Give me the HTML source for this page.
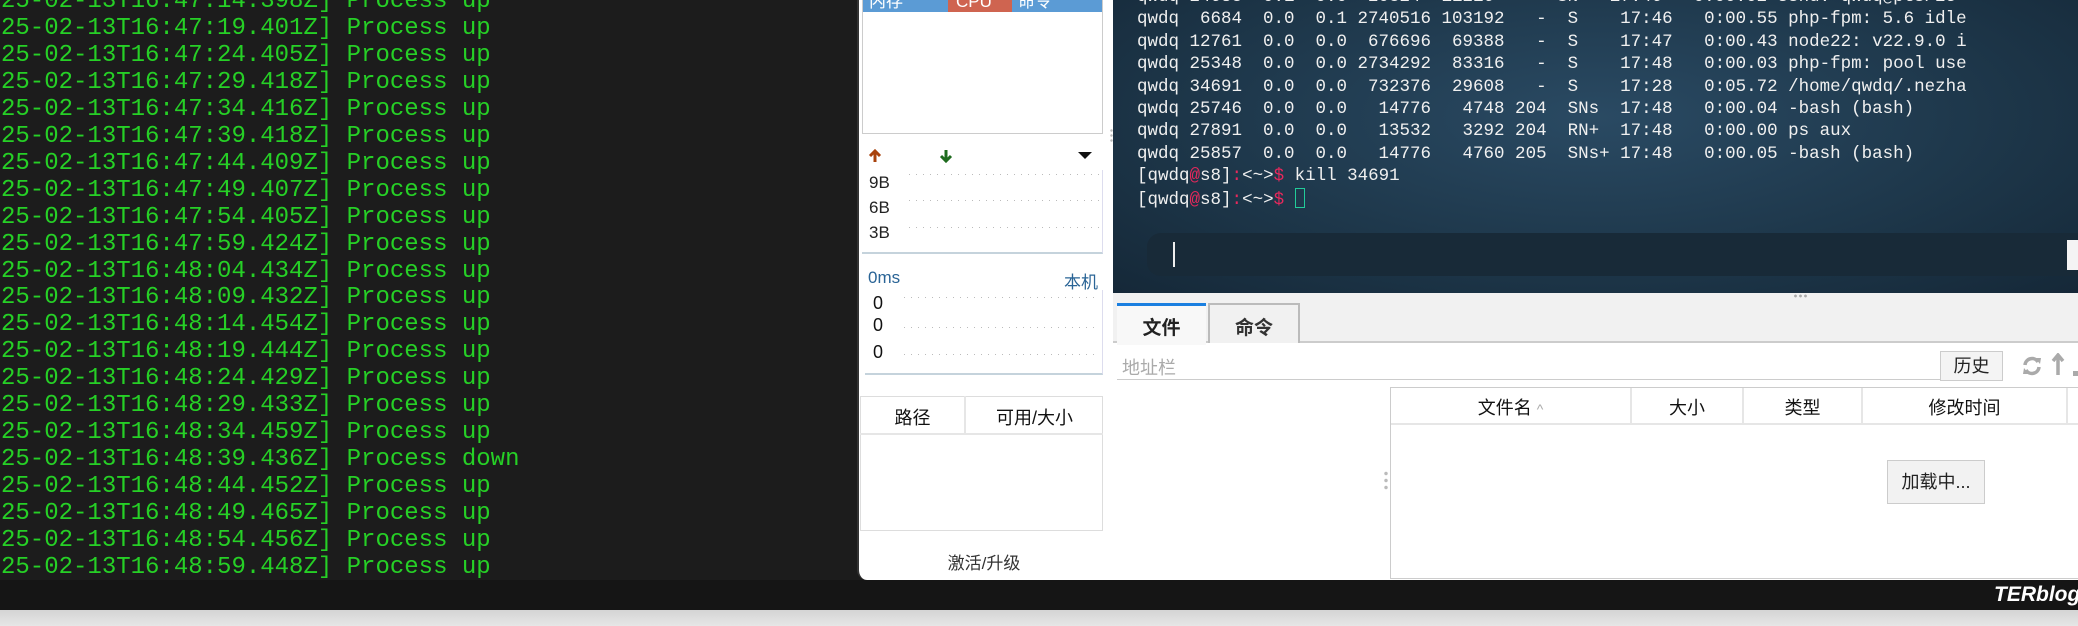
<!DOCTYPE html>
<html><head><meta charset="utf-8"><style>
*{margin:0;padding:0;box-sizing:border-box}
body{width:2078px;height:626px;overflow:hidden;background:#1c1c1c;position:relative;font-family:"Liberation Sans","Noto Sans CJK SC",sans-serif}
.abs{position:absolute}
#log{left:1px;top:-11px;color:#26d026;font-family:"Liberation Mono",monospace;font-size:24px;line-height:26.95px;white-space:pre}
#bottom{left:0;top:610px;width:2078px;height:16px;background:linear-gradient(#d4d4d4,#e6e6e6)}
#bar{left:0;top:580px;width:2078px;height:30px;background:#151515}
#panel{left:857px;top:0;width:256px;height:580px;background:#fff;border-bottom-left-radius:10px;border-left:2px solid #333}
.dots{background-image:linear-gradient(90deg,#bbb 1px,transparent 1px);background-size:7px 1px;height:1px}
#term{left:1113px;top:0;width:965px;height:293px;background:radial-gradient(ellipse at 50% 40%,#2a4a63 0%,#1d3649 60%,#152838 100%)}
#tt{left:24px;top:-14px;color:#f0f0f0;font-family:"Liberation Mono",monospace;font-size:17.5px;line-height:22.4px;white-space:pre}
.r{color:#e8285c}
#lower{left:1113px;top:293px;width:965px;height:287px;background:#fff}
.hc{font-size:17px;color:#fff;line-height:14px;top:-5px;overflow:hidden}
</style></head><body>
<div id="log" class="abs">25-02-13T16:47:14.398Z] Process up
25-02-13T16:47:19.401Z] Process up
25-02-13T16:47:24.405Z] Process up
25-02-13T16:47:29.418Z] Process up
25-02-13T16:47:34.416Z] Process up
25-02-13T16:47:39.418Z] Process up
25-02-13T16:47:44.409Z] Process up
25-02-13T16:47:49.407Z] Process up
25-02-13T16:47:54.405Z] Process up
25-02-13T16:47:59.424Z] Process up
25-02-13T16:48:04.434Z] Process up
25-02-13T16:48:09.432Z] Process up
25-02-13T16:48:14.454Z] Process up
25-02-13T16:48:19.444Z] Process up
25-02-13T16:48:24.429Z] Process up
25-02-13T16:48:29.433Z] Process up
25-02-13T16:48:34.459Z] Process up
25-02-13T16:48:39.436Z] Process down
25-02-13T16:48:44.452Z] Process up
25-02-13T16:48:49.465Z] Process up
25-02-13T16:48:54.456Z] Process up
25-02-13T16:48:59.448Z] Process up</div>

<div id="bar" class="abs"><div class="abs" style="left:1994px;top:3px;color:#fff;font-style:italic;font-weight:bold;font-size:21px">TERblog</div></div>
<div id="bottom" class="abs"></div>

<div id="panel" class="abs">
 <div class="abs" style="left:3px;top:0;width:241px;height:134px;border:1px solid #ccc;border-top:none"></div>
 <div class="abs" style="left:4px;top:0;width:85px;height:12px;background:#5b9bd5;overflow:hidden"><div class="abs hc" style="left:6px">内存</div></div>
 <div class="abs" style="left:89px;top:0;width:64px;height:12px;background:#cf6450;overflow:hidden"><div class="abs hc" style="left:8px">CPU</div></div>
 <div class="abs" style="left:153px;top:0;width:90px;height:12px;background:#5b9bd5;overflow:hidden"><div class="abs hc" style="left:6px">命令</div></div>
 <div class="abs" style="left:251px;top:128px;width:3px;height:14px;background:radial-gradient(circle,#bbb 1px,transparent 1.5px);background-size:3px 5px"></div>
 <svg class="abs" style="left:9px;top:149px" width="14" height="14"><path d="M7 2V13M2 7L7 2L12 7" stroke="#a8420c" stroke-width="3" fill="none"/></svg>
 <svg class="abs" style="left:80px;top:149px" width="14" height="14"><path d="M7 1V12M2 7L7 12L12 7" stroke="#1e6b1e" stroke-width="3" fill="none"/></svg>
 <svg class="abs" style="left:219px;top:152px" width="14" height="8"><path d="M0 0H14L7 7Z" fill="#111"/></svg>
 <div class="abs" style="left:3px;top:170px;width:241px;height:84px;border-right:1px solid #dde;border-bottom:2px solid #c5d3dc"></div>
 <div class="abs" style="left:10px;top:170px;font-size:17px;line-height:25px;color:#222">9B<br>6B<br>3B</div>
 <div class="abs dots" style="left:50px;top:174px;width:190px"></div>
 <div class="abs dots" style="left:50px;top:200px;width:190px"></div>
 <div class="abs dots" style="left:50px;top:227px;width:190px"></div>
 <div class="abs" style="left:9px;top:268px;font-size:17px;color:#2a6496">0ms</div>
 <div class="abs" style="left:205px;top:268px;font-size:17px;color:#2a6496">本机</div>
 <div class="abs" style="left:6px;top:290px;width:238px;height:85px;border-right:1px solid #dde;border-bottom:2px solid #c5d3dc"></div>
 <div class="abs" style="left:14px;top:292px;font-size:18px;line-height:22px;color:#111">0<br>0<br><span style="position:relative;top:5px">0</span></div>
 <div class="abs dots" style="left:45px;top:297px;width:195px"></div>
 <div class="abs dots" style="left:45px;top:327px;width:195px"></div>
 <div class="abs dots" style="left:45px;top:354px;width:195px"></div>
 <div class="abs" style="left:1px;top:396px;width:243px;height:135px;border:1px solid #ddd"></div>
 <div class="abs" style="left:1px;top:433px;width:243px;height:2px;background:#e6e6e6"></div>
 <div class="abs" style="left:105px;top:396px;width:2px;height:37px;background:#e6e6e6"></div>
 <div class="abs" style="left:0;top:404px;width:107px;text-align:center;font-size:18px;color:#111">路径</div>
 <div class="abs" style="left:107px;top:404px;width:137px;text-align:center;font-size:18px;color:#111">可用/大小</div>
 <div class="abs" style="left:0;top:549px;width:250px;text-align:center;font-size:17px;color:#333">激活/升级</div>
</div>

<div id="term" class="abs">
<div id="tt" class="abs">qwdq 24683  0.1  0.0  20324  11216   -  SN   17:46   0:00.02 sshd: qwdq@pts/25
qwdq  6684  0.0  0.1 2740516 103192   -  S    17:46   0:00.55 php-fpm: 5.6 idle
qwdq 12761  0.0  0.0  676696  69388   -  S    17:47   0:00.43 node22: v22.9.0 i
qwdq 25348  0.0  0.0 2734292  83316   -  S    17:48   0:00.03 php-fpm: pool use
qwdq 34691  0.0  0.0  732376  29608   -  S    17:28   0:05.72 /home/qwdq/.nezha
qwdq 25746  0.0  0.0   14776   4748 204  SNs  17:48   0:00.04 -bash (bash)
qwdq 27891  0.0  0.0   13532   3292 204  RN+  17:48   0:00.00 ps aux
qwdq 25857  0.0  0.0   14776   4760 205  SNs+ 17:48   0:00.05 -bash (bash)
[qwdq<span class="r">@</span>s8]<span class="r">:</span>&lt;~&gt;<span class="r">$</span> kill 34691
[qwdq<span class="r">@</span>s8]<span class="r">:</span>&lt;~&gt;<span class="r">$</span> <span style="display:inline-block;width:10px;height:20px;border:1px solid #2c9;vertical-align:-4px"></span></div>
 <div class="abs" style="left:34px;top:233px;width:931px;height:43px;background:#182a38;border-radius:14px 0 0 14px"></div>
 <div class="abs" style="left:60px;top:242px;width:2px;height:25px;background:#eee"></div>
 <div class="abs" style="left:954px;top:240px;width:11px;height:30px;background:#f4f4f4"></div>
</div>

<div id="lower" class="abs">
 <div class="abs" style="left:0;top:0;width:965px;height:50px;background:#f1f1f1;border-bottom:2px solid #ccc"></div>
 <div class="abs" style="left:680px;top:1px;width:14px;height:4px;background:radial-gradient(circle,#aaa 1.2px,transparent 1.6px);background-size:5px 4px"></div>
 <div class="abs" style="left:4px;top:10px;width:89px;height:42px;background:#f8f8f8;border-top:3px solid #1a7fe0"></div>
 <div class="abs" style="left:4px;top:20px;width:89px;text-align:center;font-size:19px;font-weight:bold;color:#222">文件</div>
 <div class="abs" style="left:95px;top:10px;width:92px;height:40px;border:2px solid #bbb;border-bottom:none;background:#f1f1f1"></div>
 <div class="abs" style="left:95px;top:20px;width:92px;text-align:center;font-size:19px;font-weight:bold;color:#333">命令</div>
 <div class="abs" style="left:9px;top:61px;font-size:18px;color:#aaa">地址栏</div>
 <div class="abs" style="left:4px;top:86px;width:844px;height:1px;background:#ccc"></div>
 <div class="abs" style="left:827px;top:58px;width:63px;height:30px;border:1px solid #ccc;background:#f4f4f4;text-align:center;font-size:18px;line-height:28px;color:#222">历史</div>
 <svg class="abs" style="left:908px;top:62px" width="22" height="22"><path d="M4 10A7 7 0 0 1 17 7M18 12A7 7 0 0 1 5 15" stroke="#aaa" stroke-width="3.5" fill="none"/><path d="M14 3L20 3L19 9Z M8 19L2 19L3 13Z" fill="#aaa"/></svg>
 <svg class="abs" style="left:938px;top:60px" width="14" height="24"><path d="M7 3V22M2 8L7 2L12 8" stroke="#aaa" stroke-width="3.5" fill="none"/></svg>
 <div class="abs" style="left:960px;top:78px;width:5px;height:5px;background:#aaa"></div>
 <div class="abs" style="left:277px;top:94px;width:688px;height:192px;border:1px solid #ccc;border-right:none"></div>
 <div class="abs" style="left:278px;top:130px;width:687px;height:2px;background:#e6e6e6"></div>
 <div class="abs" style="left:517px;top:95px;width:2px;height:35px;background:#e6e6e6"></div>
 <div class="abs" style="left:629px;top:95px;width:2px;height:35px;background:#e6e6e6"></div>
 <div class="abs" style="left:748px;top:95px;width:2px;height:35px;background:#e6e6e6"></div>
 <div class="abs" style="left:953px;top:95px;width:2px;height:35px;background:#e6e6e6"></div>
 <div class="abs" style="left:278px;top:101px;width:239px;text-align:center;font-size:18px;color:#111">文件名 <span style="color:#aaa;font-size:14px">^</span></div>
 <div class="abs" style="left:519px;top:101px;width:110px;text-align:center;font-size:18px;color:#111">大小</div>
 <div class="abs" style="left:631px;top:101px;width:117px;text-align:center;font-size:18px;color:#111">类型</div>
 <div class="abs" style="left:750px;top:101px;width:203px;text-align:center;font-size:18px;color:#111">修改时间</div>
 <div class="abs" style="left:774px;top:167px;width:98px;height:44px;border:1px solid #ccc;background:#f2f2f2;text-align:center;font-size:18px;line-height:42px;color:#222">加载中...</div>
 <div class="abs" style="left:271px;top:177px;width:4px;height:22px;background:radial-gradient(circle,#bbb 1.5px,transparent 2px);background-size:4px 7px"></div>
</div>
</body></html>
